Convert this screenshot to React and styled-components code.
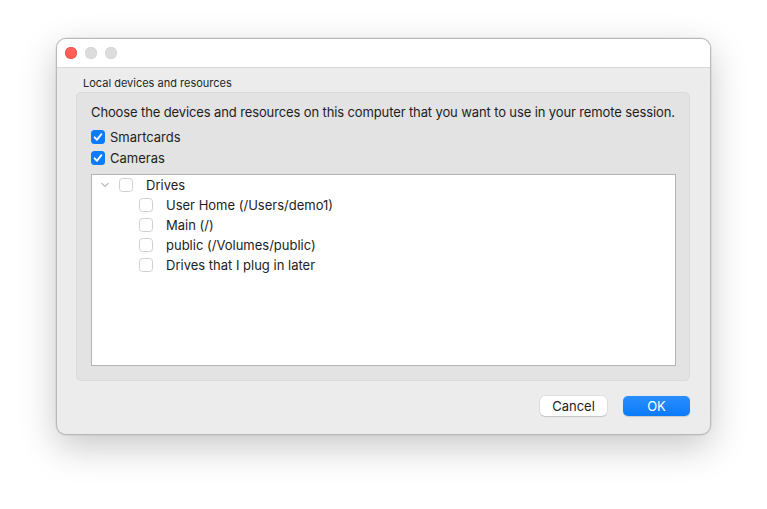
import React from 'react'
import styled, { createGlobalStyle } from 'styled-components'

const Global = createGlobalStyle`
  html, body { margin: 0; padding: 0; background: #ffffff; }
  body { font-family: Inter, "Noto Sans", "Liberation Sans", sans-serif; color: #1d1d1d; }
  #root { width: 767px; height: 509px; overflow: hidden; }
`

const Stage = styled.div`
  padding: 38px 0 0 56px;
`

const Window = styled.div`
  width: 655px;
  height: 397px;
  box-sizing: border-box;
  border-radius: 10px;
  border: 1px solid #b9b9b9;
  background: #ececec;
  box-shadow: 0 12px 36px rgba(0, 0, 0, 0.22), 0 0 0 0.5px rgba(0, 0, 0, 0.1);
  overflow: hidden;
  display: flex;
  flex-direction: column;
`

const TitleBar = styled.div`
  height: 28px;
  background: #ffffff;
  border-bottom: 1px solid #d8d8d8;
  display: flex;
  align-items: center;
  gap: 8px;
  padding-left: 8px;
  flex-shrink: 0;
`

const Light = styled.span`
  width: 12px;
  height: 12px;
  border-radius: 50%;
  background: ${p => p.$color};
  box-shadow: inset 0 0 0 0.5px ${p => p.$edge};
`

const Body = styled.div`
  flex: 1;
  padding: 8px 20px 0 19px;
  display: flex;
  flex-direction: column;
`

const GroupLabel = styled.div`
  font-size: 11px;
  line-height: 14px;
  padding-left: 7px;
  margin-bottom: 2px;
  color: #262626;
`

const Group = styled.div`
  background: #e3e3e3;
  border: 1px solid #dadada;
  border-radius: 5px;
  height: 289px;
  box-sizing: border-box;
  padding: 10px 13px 14px 14px;
  display: flex;
  flex-direction: column;
`

const Intro = styled.div`
  font-size: 13px;
  line-height: 18px;
  margin-bottom: 5px;
  white-space: nowrap;
  letter-spacing: -0.12px;
`

const CheckRow = styled.label`
  display: flex;
  align-items: center;
  gap: 5px;
  font-size: 13px;
  height: 21px;
`

const Box = styled.span`
  width: 14px;
  height: 14px;
  box-sizing: border-box;
  border-radius: 3.5px;
  flex-shrink: 0;
  display: inline-flex;
  align-items: center;
  justify-content: center;
  background: ${p => (p.$checked ? '#0b7dfb' : '#ffffff')};
  border: ${p => (p.$checked ? 'none' : '1px solid #cfcfcf')};
`

const Tree = styled.div`
  margin-top: 6px;
  flex: 1;
  background: #ffffff;
  border: 1px solid #b3b3b3;
`

const TreeRow = styled.div`
  height: 20px;
  display: flex;
  align-items: center;
  padding-left: ${p => p.$indent}px;
  font-size: 13px;
  gap: 13px;
`

const Chevron = styled.span`
  width: 10px;
  display: inline-flex;
  margin-right: -4px;
`

const Footer = styled.div`
  display: flex;
  justify-content: flex-end;
  gap: 16px;
  padding-top: 15px;
`

const Button = styled.button`
  width: 67px;
  height: 20px;
  border-radius: 5px;
  font-family: inherit;
  font-size: 13px;
  line-height: 20px;
  padding: 0;
  border: none;
  background: ${p => (p.$primary ? 'linear-gradient(#2a8ffd, #0a7bfb)' : '#ffffff')};
  color: ${p => (p.$primary ? '#ffffff' : '#1d1d1d')};
  box-shadow: ${p =>
    p.$primary
      ? '0 0.5px 1px rgba(0,0,0,0.15)'
      : '0 0 0 0.5px rgba(0,0,0,0.12), 0 1px 1px rgba(0,0,0,0.12)'};
`

const Check = () => (
  <svg width="10" height="10" viewBox="0 0 10 10">
    <path d="M1.6 5.3 L4 7.8 L8.4 2.1" fill="none" stroke="#fff" strokeWidth="1.8" strokeLinecap="round" strokeLinejoin="round" />
  </svg>
)

const Checkbox = ({ checked }) => <Box $checked={checked}>{checked && <Check />}</Box>

const drives = ['User Home (/Users/demo1)', 'Main (/)', 'public (/Volumes/public)', 'Drives that I plug in later']

export default function App() {
  return (
    <>
      <Global />
      <Stage>
        <Window>
          <TitleBar>
            <Light $color="#fe5f57" $edge="#e14640" />
            <Light $color="#dcdcdc" $edge="#cfcfcf" />
            <Light $color="#dcdcdc" $edge="#cfcfcf" />
          </TitleBar>
          <Body>
            <GroupLabel>Local devices and resources</GroupLabel>
            <Group>
              <Intro>Choose the devices and resources on this computer that you want to use in your remote session.</Intro>
              <CheckRow><Checkbox checked />Smartcards</CheckRow>
              <CheckRow><Checkbox checked />Cameras</CheckRow>
              <Tree>
                <TreeRow $indent={8}>
                  <Chevron>
                    <svg width="10" height="6" viewBox="0 0 10 6">
                      <path d="M1.5 1 L5 4.5 L8.5 1" fill="none" stroke="#b9b9b9" strokeWidth="1.1" />
                    </svg>
                  </Chevron>
                  <Checkbox />
                  <span>Drives</span>
                </TreeRow>
                {drives.map(d => (
                  <TreeRow key={d} $indent={47}>
                    <Checkbox />
                    <span>{d}</span>
                  </TreeRow>
                ))}
              </Tree>
            </Group>
            <Footer>
              <Button>Cancel</Button>
              <Button $primary>OK</Button>
            </Footer>
          </Body>
        </Window>
      </Stage>
    </>
  )
}
